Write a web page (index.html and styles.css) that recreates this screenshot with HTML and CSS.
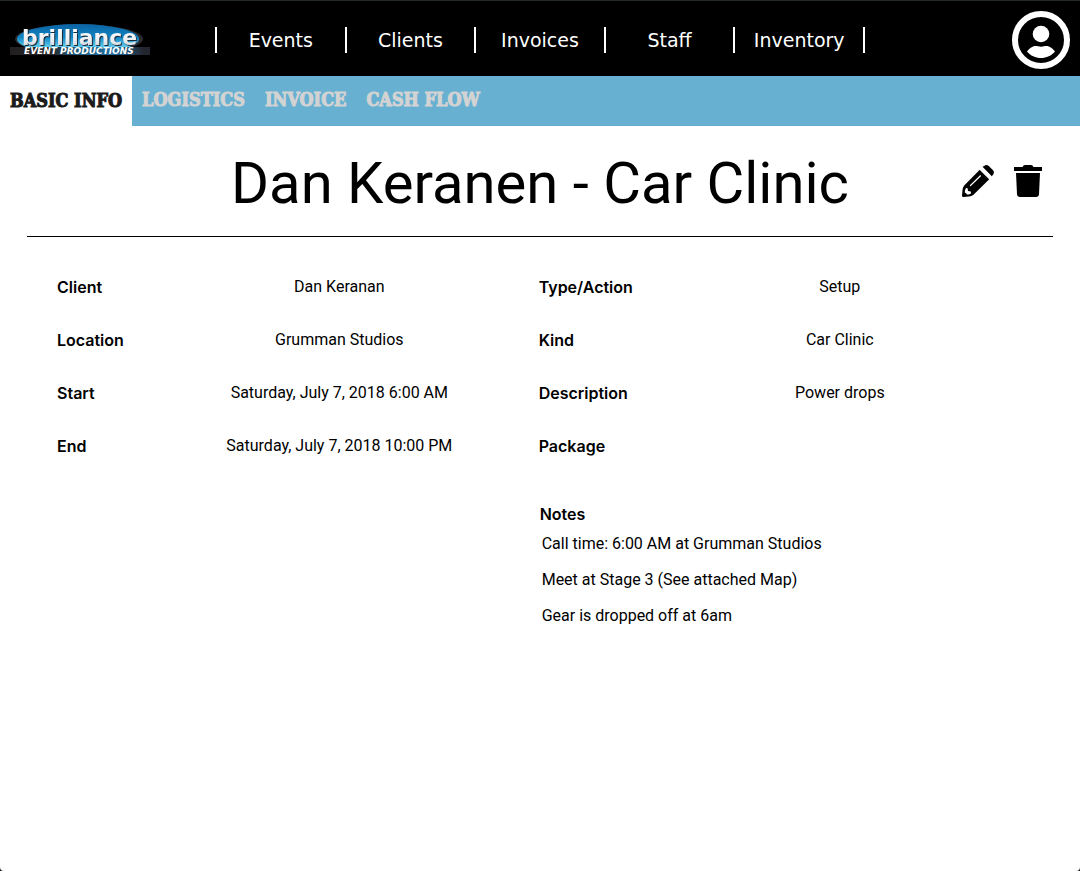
FILE: index.html
```html
<!DOCTYPE html>
<html lang="en">
<head>
<meta charset="utf-8">
<meta name="viewport" content="width=device-width, initial-scale=1">
<title>Dan Keranen - Car Clinic</title>
<link rel="stylesheet" href="styles.css">
</head>
<body>
<div class="app">
  <header class="topbar">
    <a class="logo" href="#" aria-label="Brilliance Event Productions">
      <svg width="140" height="34" viewBox="0 0 140 34">
        <defs>
          <linearGradient id="oval" x1="0" y1="0" x2="0" y2="1">
            <stop offset="0" stop-color="#0b62a3"/>
            <stop offset="0.45" stop-color="#1186c4"/>
            <stop offset="0.75" stop-color="#5cc8ea"/>
            <stop offset="1" stop-color="#1c7fb4"/>
          </linearGradient>
          <linearGradient id="strip" x1="0" y1="0" x2="1" y2="0">
            <stop offset="0" stop-color="#231f20"/>
            <stop offset="0.28" stop-color="#26252a"/>
            <stop offset="0.5" stop-color="#1f6288"/>
            <stop offset="0.75" stop-color="#1f6c9c"/>
            <stop offset="0.95" stop-color="#24262f"/>
          </linearGradient>
          <linearGradient id="chrome" x1="0" y1="0" x2="0" y2="1">
            <stop offset="0" stop-color="#ffffff"/>
            <stop offset="0.6" stop-color="#eceff2"/>
            <stop offset="1" stop-color="#c4c9d0"/>
          </linearGradient>
        </defs>
        <ellipse cx="69" cy="16" rx="64" ry="15" fill="#2b2b2f"/>
        <ellipse cx="68" cy="16" rx="61" ry="15" fill="url(#oval)"/>
        <rect x="0" y="24" width="140" height="8" fill="url(#strip)"/>
        <text class="logo-name" x="12" y="22" fill="url(#chrome)">brilliance</text>
        <text class="logo-sub" x="14" y="31">EVENT PRODUCTIONS</text>
      </svg>
    </a>
    <nav class="mainnav">
      <a href="#">Events</a>
      <a href="#">Clients</a>
      <a href="#">Invoices</a>
      <a href="#">Staff</a>
      <a href="#">Inventory</a>
    </nav>
    <button class="icon-button account" type="button" aria-label="Account">
      <svg width="58" height="58" viewBox="0 0 58 58">
        <circle cx="29" cy="29" r="26" fill="none" stroke="#fff" stroke-width="6"/>
        <circle cx="29" cy="23" r="8.3" fill="#fff"/>
        <path fill="#fff" d="M15 40.500C17 37.500 20.500 35 23.500 35C25.500 35 26.500 35.700 29 35.700C31.500 35.700 32.500 35 34.500 35C37.500 35 41 37.500 43 40.500C39.500 44.800 34.500 47 29 47C23.500 47 18.500 44.800 15 40.500Z"/>
      </svg>
    </button>
  </header>

  <nav class="tabs">
    <a class="active" href="#" aria-current="page">BASIC INFO</a>
    <a href="#">LOGISTICS</a>
    <a href="#">INVOICE</a>
    <a href="#">CASH FLOW</a>
  </nav>

  <main class="event">
    <div class="event-head">
      <h1>Dan Keranen - Car Clinic</h1>
      <div class="actions">
        <button class="icon-button" type="button" aria-label="Edit">
          <svg width="32" height="32" viewBox="0 0 32 32">
            <path d="M20.500 1.700L22.200 0.900Q24.500 -0.700 26.800 1L31 5.200Q32.700 7.300 31.200 9.500L29.800 11.200Z"/>
            <path d="M18.500 4L28 13.500L11.500 29.800Q9.500 31.200 7 31.500L1.500 32Q0 32 0 30.500L0.500 25Q0.800 22.500 2.200 20.500Z"/>
            <path fill="none" stroke="#fff" stroke-width="1.500" d="M17.600 3.600L28.400 14.400"/>
            <path fill="none" stroke="#fff" stroke-width="1.200" stroke-linecap="round" d="M8.500 20.500L18.500 10.800"/>
            <path fill="#fff" d="M4 23L5.600 23.200L6 26L8.800 26.500L9 28.400Q6.800 29.600 4.800 29.600Q4.600 28 2.700 27.500Q2.800 25 4 23Z"/>
          </svg>
        </button>
        <button class="icon-button" type="button" aria-label="Delete">
          <svg width="28" height="32" viewBox="0 0 28 32">
            <path d="M0 2H8.500L9.500 0.600Q10 0 11 0H17Q18 0 18.500 0.600L19.500 2H28V6H0Z"/>
            <path d="M2 8H26L25 29Q24.800 32 22 32H6Q3.200 32 3 29Z"/>
          </svg>
        </button>
      </div>
    </div>

    <div class="details">
      <dl class="fields">
        <dt>Client</dt><dd>Dan Keranan</dd>
        <dt>Location</dt><dd>Grumman Studios</dd>
        <dt>Start</dt><dd>Saturday, July 7, 2018 6:00 AM</dd>
        <dt>End</dt><dd>Saturday, July 7, 2018 10:00 PM</dd>
      </dl>
      <div>
        <dl class="fields wide">
          <dt>Type/Action</dt><dd>Setup</dd>
          <dt>Kind</dt><dd>Car Clinic</dd>
          <dt>Description</dt><dd>Power drops</dd>
          <dt>Package</dt><dd></dd>
        </dl>
        <section class="notes">
          <h2>Notes</h2>
          <ul>
            <li>Call time: 6:00 AM at Grumman Studios</li>
            <li>Meet at Stage 3 (See attached Map)</li>
            <li>Gear is dropped off at 6am</li>
          </ul>
        </section>
      </div>
    </div>
  </main>
</div>
</body>
</html>
```
FILE: styles.css
```css
* {
  box-sizing: border-box;
}

html {
  background: #1a1a1a;
}

body {
  margin: 0;
  color: #000;
  font-family: Roboto, "Liberation Sans", sans-serif;
  font-size: 16px;
  line-height: 18px;
}

a {
  color: inherit;
  text-decoration: none;
}

svg {
  display: block;
}

.app {
  min-height: 100vh;
  background: #fff;
  border-radius: 0 0 4px 4px;
}

.icon-button {
  padding: 0;
  border: 0;
  background: none;
  color: inherit;
  cursor: pointer;
}

.topbar {
  display: grid;
  grid-template-columns: 1fr 60% 1fr;
  align-items: center;
  height: 76px;
  padding: 3px 0 0;
  background: #000;
  border-top: 1px solid #23282b;
}

.logo {
  margin-left: 10px;
  justify-self: start;
}

.logo-name {
  font: bold 22px "DejaVu Sans", sans-serif;
  filter: drop-shadow(1px 1px 0 #1d2a3a);
}

.logo-sub {
  font: italic bold 9px "DejaVu Sans", sans-serif;
  fill: #fff;
}

.mainnav {
  display: grid;
  grid-template-columns: repeat(5, 1fr);
  margin: 0 -1px;
  border-left: 2px solid #fff;
  color: #fff;
  font: 19px/26px "DejaVu Sans", sans-serif;
  text-align: center;
}

.mainnav a {
  border-right: 2px solid #fff;
}

.account {
  margin-right: 10px;
  justify-self: end;
}

.tabs {
  display: flex;
  height: 50px;
  background: #67b0d1;
  color: #d3d3d3;
  font: bold 18px/48px "DejaVu Serif Condensed", "Liberation Serif", serif;
  -webkit-text-stroke: 1px currentColor;
}

.tabs a {
  padding: 0 10px;
}

.tabs .active {
  padding-top: 1px;
  background: #fff;
  color: #1b1b1b;
}

.event {
  padding: 0 27px;
}

.event-head {
  display: grid;
  grid-template-columns: 1fr auto 1fr;
  height: 111px;
  align-items: center;
  border-bottom: 1px solid #000;
}

h1 {
  grid-column: 2;
  margin: 0;
  padding-top: 4px;
  font-size: 58px;
  font-weight: 400;
  line-height: 72px;
}

.actions {
  display: flex;
  justify-content: flex-end;
  gap: 20px;
  padding-right: 11px;
}

.details {
  display: grid;
  grid-template-columns: 49fr 51fr;
  align-items: start;
  padding: 41px 13px 0 30px;
}

.fields {
  display: grid;
  grid-template-columns: 83px 1fr;
  row-gap: 35px;
  margin: 0;
}

.fields.wide {
  grid-template-columns: 101px 1fr;
}

dt,
.notes h2 {
  font-family: Inter, "Liberation Sans", sans-serif;
  font-weight: 600;
}

dd {
  margin: 0;
  text-align: center;
}

.notes {
  padding: 50px 0 0 1px;
}

.notes h2 {
  margin: 0 0 12px;
  font-size: 16px;
}

.notes ul {
  display: grid;
  gap: 18px;
  margin: 0;
  padding: 0 0 0 2px;
  list-style: none;
}
```
